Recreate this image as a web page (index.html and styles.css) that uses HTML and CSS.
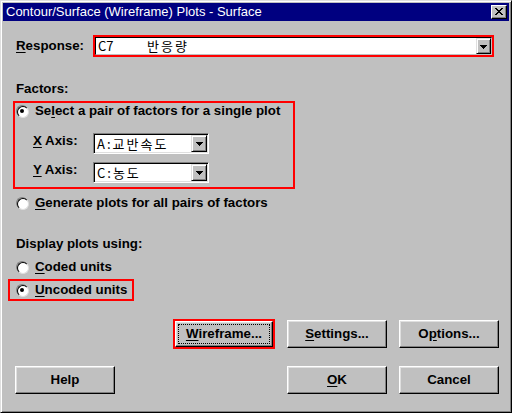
FILE: index.html
```html
<!DOCTYPE html>
<html>
<head>
<meta charset="utf-8">
<link rel="stylesheet" href="styles.css">
</head>
<body>
<div class="window">
  <div class="titlebar">
    <span class="title">Contour/Surface (Wireframe) Plots - Surface</span>
    <span class="close-btn">
      <svg width="8" height="7" viewBox="0 0 8 7" shape-rendering="crispEdges">
        <path fill="#000" d="M0 0h2v1h1v1h2v-1h1v-1h2v1h-1v1h-1v1h-1v1h1v1h1v1h1v1h-2v-1h-1v-1h-2v1h-1v1h-2v-1h1v-1h1v-1h1v-1h-1v-1h-1v-1h-1z"/>
      </svg>
    </span>
  </div>
  <div class="content">
    <div class="response-row">
      <span class="label response-label"><u>R</u>esponse:</span>
      <div class="mark response-mark">
        <div class="response-field">
          <span class="value"><span class="code">C7</span><span class="ko">반응량</span></span>
          <span class="drop drop-small">
            <svg width="7" height="4" viewBox="0 0 7 4" shape-rendering="crispEdges"><path fill="#000" d="M0 0h7v1h-1v1h-1v1h-1v1h-1v-1h-1v-1h-1v-1h-1z"/></svg>
          </span>
        </div>
      </div>
    </div>

    <div class="label heading factors-heading">Factors:</div>

    <div class="mark factor-box">
      <div class="option">
        <span class="radio on"></span>
        <span class="label">Se<u>l</u>ect a pair of factors for a single plot</span>
      </div>
      <div class="axis-row x-row">
        <span class="label axis-label"><u>X</u> Axis:</span>
        <div class="combo">
          <span class="value ko">A:교반속도</span>
          <span class="drop">
            <svg width="7" height="4" viewBox="0 0 7 4" shape-rendering="crispEdges"><path fill="#000" d="M0 0h7v1h-1v1h-1v1h-1v1h-1v-1h-1v-1h-1v-1h-1z"/></svg>
          </span>
        </div>
      </div>
      <div class="axis-row y-row">
        <span class="label axis-label"><u>Y</u> Axis:</span>
        <div class="combo">
          <span class="value ko">C:농도</span>
          <span class="drop">
            <svg width="7" height="4" viewBox="0 0 7 4" shape-rendering="crispEdges"><path fill="#000" d="M0 0h7v1h-1v1h-1v1h-1v1h-1v-1h-1v-1h-1v-1h-1z"/></svg>
          </span>
        </div>
      </div>
    </div>

    <div class="option generate-option">
      <span class="radio"></span>
      <span class="label"><u>G</u>enerate plots for all pairs of factors</span>
    </div>

    <div class="label heading display-heading">Display plots using:</div>

    <div class="option coded-option">
      <span class="radio"></span>
      <span class="label"><u>C</u>oded units</span>
    </div>

    <div class="mark uncoded-box">
      <div class="option">
        <span class="radio on"></span>
        <span class="label"><u>U</u>ncoded units</span>
      </div>
    </div>

    <div class="button-row first-row">
      <div class="mark focus-mark">
        <button class="btn focused"><span class="focus-ring"><u>W</u>ireframe...</span></button>
      </div>
      <button class="btn"><u>S</u>ettings...</button>
      <button class="btn">O<u>p</u>tions...</button>
    </div>

    <div class="button-row second-row">
      <button class="btn help-btn">Help</button>
      <span class="spacer"></span>
      <button class="btn"><u>O</u>K</button>
      <button class="btn">Cancel</button>
    </div>
  </div>
</div>
</body>
</html>
```
FILE: styles.css
```css
* {
  box-sizing: border-box;
}

html, body {
  margin: 0;
  padding: 0;
  background: #c0c0c0;
}

body {
  font-family: "Liberation Sans", Arial, sans-serif;
  color: #000;
}

.window {
  width: 512px;
  height: 413px;
  background: #c0c0c0;
  border-style: solid;
  border-width: 1px;
  border-color: #dfdfdf #000 #000 #dfdfdf;
  box-shadow: inset 1px 1px #fff, inset -1px -1px #808080;
  padding: 2px;
  display: flex;
  flex-direction: column;
}

.titlebar {
  height: 18px;
  background: #000080;
  color: #fff;
  display: flex;
  align-items: center;
  justify-content: space-between;
  padding: 0 2px 0 3px;
  flex-shrink: 0;
}

.title {
  font-size: 13px;
  line-height: 18px;
  white-space: nowrap;
}

.close-btn {
  width: 16px;
  height: 14px;
  background: #c0c0c0;
  border-style: solid;
  border-width: 1px;
  border-color: #fff #000 #000 #fff;
  box-shadow: inset -1px -1px #808080;
  display: flex;
  align-items: center;
  justify-content: center;
  padding: 0 1px 1px 0;
}

.close-btn svg {
  display: block;
}

.content {
  display: flex;
  flex-direction: column;
  align-items: flex-start;
  padding-top: 14px;
}

.label {
  font-size: 13.3px;
  font-weight: bold;
  line-height: 16px;
  white-space: nowrap;
}

u {
  text-decoration: underline;
  text-underline-offset: 2px;
}

.mark {
  border: 2px solid #ff0000;
}

/* Response row */
.response-row {
  display: flex;
  align-items: center;
  margin-left: 13px;
  height: 22px;
}

.response-label {
  width: 77px;
}

.response-mark {
  width: 401px;
  height: 22px;
}

.response-field {
  height: 100%;
  background: #fff;
  border-style: solid;
  border-width: 1px;
  border-color: #000 #c0c0c0 #c0c0c0 #000;
  display: flex;
  align-items: stretch;
}

.value {
  flex: 1;
  font-family: "Noto Sans CJK KR", "Liberation Sans", sans-serif;
  font-size: 13px;
  line-height: 16px;
  padding-left: 2px;
  display: flex;
  align-items: center;
  white-space: nowrap;
}

.code {
  display: inline-block;
  width: 49px;
}

.ko {
  font-family: "Noto Sans CJK KR", sans-serif;
  letter-spacing: 2px;
}

.drop {
  width: 16px;
  background: #c0c0c0;
  border-style: solid;
  border-width: 1px;
  border-color: #dfdfdf #000 #000 #dfdfdf;
  box-shadow: inset 1px 1px #fff, inset -1px -1px #808080;
  display: flex;
  align-items: center;
  justify-content: center;
  padding-top: 1px;
}

.drop-small {
  width: 15px;
}

.drop svg {
  display: block;
}

/* Headings */
.heading {
  margin-left: 13px;
}

.factors-heading {
  margin-top: 24px;
}

.display-heading {
  margin-top: 25px;
}

/* Factor box */
.factor-box {
  margin-top: 4px;
  margin-left: 10px;
  width: 282px;
  height: 88px;
  padding: 0 0 4px 1px;
  display: flex;
  flex-direction: column;
}

.option {
  display: flex;
  align-items: center;
  gap: 7px;
  height: 16px;
}

.radio {
  width: 12px;
  height: 12px;
  border-radius: 50%;
  border-style: solid;
  border-width: 1px;
  border-color: #808080 #fff #fff #808080;
  position: relative;
  flex-shrink: 0;
}

.radio::before {
  content: "";
  display: block;
  width: 10px;
  height: 10px;
  border-radius: 50%;
  border-style: solid;
  border-width: 1px;
  border-color: #000 #dfdfdf #dfdfdf #000;
  background: #fff;
}

.radio.on::after {
  content: "";
  position: absolute;
  left: 3px;
  top: 3px;
  width: 4px;
  height: 4px;
  border-radius: 50%;
  background: #000;
}

.axis-row {
  display: flex;
  align-items: center;
  padding-left: 17px;
}

.x-row {
  margin-top: 14px;
}

.y-row {
  margin-top: 8px;
}

.axis-label {
  width: 60px;
  margin-bottom: 5px;
}

.combo {
  width: 116px;
  height: 21px;
  background: #fff;
  border-style: solid;
  border-width: 1px;
  border-color: #808080 #fff #fff #808080;
  box-shadow: inset 1px 1px #000, inset -1px -1px #dfdfdf;
  padding: 1px;
  display: flex;
  align-items: stretch;
}

.combo .value {
  padding-left: 2px;
}

/* Options below */
.generate-option {
  margin-top: 6px;
  margin-left: 13px;
}

.coded-option {
  margin-top: 7px;
  margin-left: 13px;
}

.uncoded-box {
  margin-top: 4px;
  margin-left: 5px;
  width: 126px;
  height: 22px;
  padding-left: 6px;
  display: flex;
  align-items: center;
}

/* Buttons */
.button-row {
  display: flex;
  align-items: center;
  gap: 12px;
  align-self: stretch;
  padding-right: 10px;
}

.first-row {
  margin-top: 18px;
  justify-content: flex-end;
  height: 30px;
}

.second-row {
  margin-top: 17px;
  padding-left: 12px;
  height: 28px;
}

.spacer {
  flex: 1;
}

.btn {
  appearance: none;
  -webkit-appearance: none;
  width: 100px;
  height: 28px;
  margin: 0;
  padding: 0;
  background: #c0c0c0;
  border-style: solid;
  border-width: 1px;
  border-color: #fff #000 #000 #fff;
  box-shadow: inset -1px -1px #808080, inset 1px 1px #dfdfdf;
  font-family: "Liberation Sans", Arial, sans-serif;
  font-size: 13.3px;
  font-weight: bold;
  color: #000;
  line-height: 16px;
  display: flex;
  align-items: center;
  justify-content: center;
  white-space: nowrap;
}

.focus-mark {
  width: 102px;
  height: 30px;
  display: flex;
}

.btn.focused {
  width: 98px;
  height: 26px;
  padding: 3px;
}

.focus-ring {
  flex: 1;
  align-self: stretch;
  display: flex;
  align-items: center;
  justify-content: center;
  outline: 1px dotted #000;
}
```
